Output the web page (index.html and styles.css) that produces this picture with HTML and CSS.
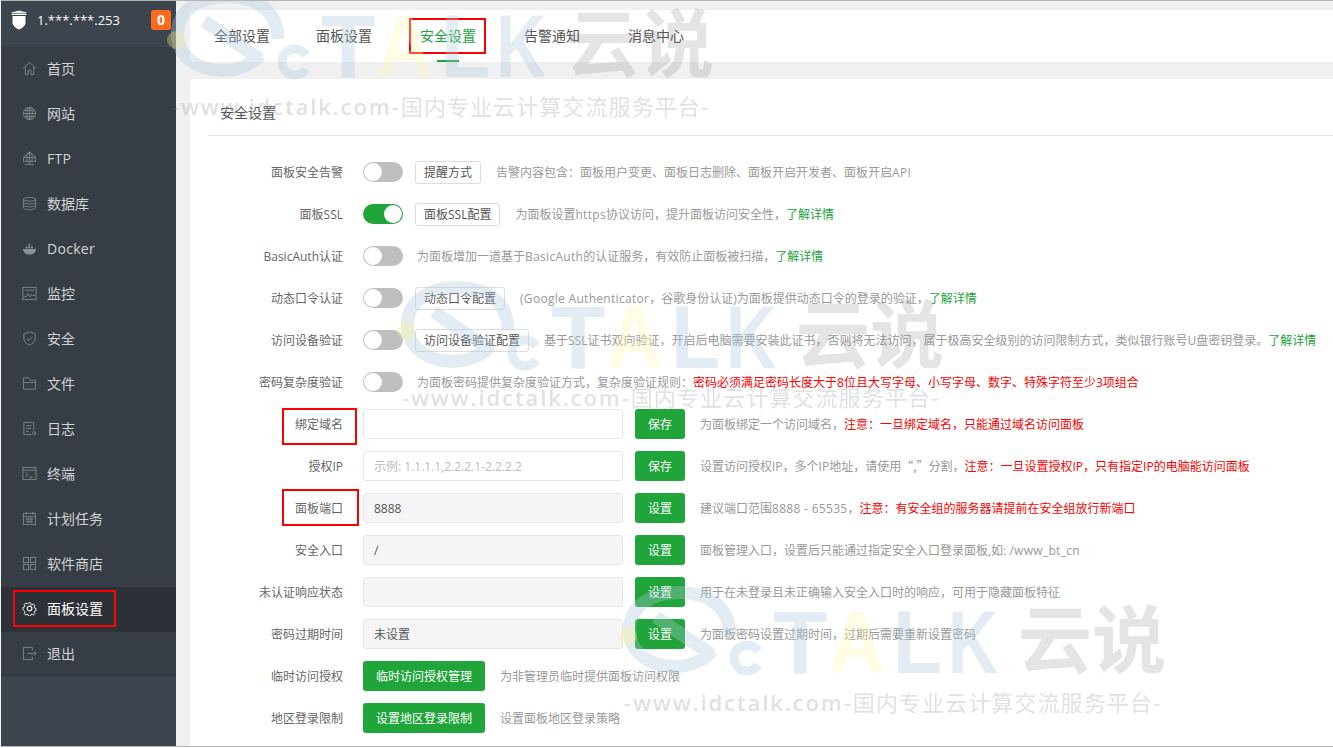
FILE: index.html
```html
<!DOCTYPE html>
<html lang="zh-CN">
<head>
<meta charset="utf-8">
<title>面板设置</title>
<link rel="stylesheet" href="styles.css">
</head>
<body>
<div class="app">
  <aside class="sidebar">
    <div class="brand">
      <svg class="brand-icon" viewBox="0 0 18 20"><path d="M1 2.500 9 .5l8 2-1.500 1h-13z" fill="#e8e8e8"/><path d="M1 5 2 4h14l1 1H1z" fill="#fff"/><path d="M2.500 6h13v6.500c0 3-3 5.500-6.500 7-3.500-1.500-6.500-4-6.500-7z" fill="#fff"/></svg>
      <span class="brand-ip">1.***.***.253</span>
      <span class="badge">0</span>
    </div>
    <nav class="menu">
      <a class="item"><svg class="ico" viewBox="0 0 16 16"><path d="M1 8 8 1.500 15 8M3.500 6.500V14.500H6.500V10H9.500V14.500H12.500V6.500"/></svg>首页</a>
      <a class="item"><svg class="ico" viewBox="0 0 16 16"><circle cx="8" cy="8" r="6.500"/><ellipse cx="8" cy="8" rx="3" ry="6.500"/><path d="M8 1.500v13M1.500 8h13M2.500 4.800h11M2.500 11.200h11"/></svg>网站</a>
      <a class="item"><svg class="ico" viewBox="0 0 16 16"><path d="M2 11a6.500 6 0 1 1 12 0"/><ellipse cx="8" cy="7" rx="3" ry="6"/><path d="M8 1v10M1.500 7h13M1 11h14M3 14.500h10"/></svg><span class="lat">FTP</span></a>
      <a class="item"><svg class="ico" viewBox="0 0 16 16"><ellipse cx="8" cy="3.500" rx="6.500" ry="2"/><path d="M1.500 3.500v9c0 1.100 2.900 2 6.500 2s6.500-.9 6.500-2v-9M1.500 6.500c0 1.100 2.900 2 6.500 2s6.500-.9 6.500-2M1.500 9.500c0 1.100 2.900 2 6.500 2s6.500-.9 6.500-2"/></svg>数据库</a>
      <a class="item"><svg class="ico ico-fill" viewBox="0 0 16 16"><path d="M1 8.500h14c-.5 3.500-3 6-7 6-4.200 0-6.500-2.500-7-6z"/><rect x="4" y="5.800" width="2" height="2"/><rect x="6.800" y="5.800" width="2" height="2"/><rect x="6.800" y="3" width="2" height="2"/><rect x="9.600" y="5.800" width="2" height="2"/></svg><span class="lat">Docker</span></a>
      <a class="item"><svg class="ico" viewBox="0 0 16 16"><rect x="1" y="1.500" width="14" height="13"/><path d="M3 4.500h10M1.500 11 5 11l1.500-3 2 3.500 1.500-2.500 1 1h3"/></svg>监控</a>
      <a class="item"><svg class="ico" viewBox="0 0 16 16"><path d="M8 1 14 3v5.500c0 3-3 5.500-6 6.500-3-1-6-3.500-6-6.500V3z"/><path d="M5 8l2.200 2L11 6"/></svg>安全</a>
      <a class="item"><svg class="ico" viewBox="0 0 16 16"><path d="M1.500 14V2H7l1.500 2.500h6V14zM1.500 7h13"/></svg>文件</a>
      <a class="item"><svg class="ico" viewBox="0 0 16 16"><path d="M10 14.500H2V1.500h10.500V10M4.500 5h5.500M4.500 8h5.500M4.500 11h3"/><circle cx="13" cy="13" r="1.600"/></svg>日志</a>
      <a class="item"><svg class="ico" viewBox="0 0 16 16"><rect x="1" y="1.500" width="14" height="13"/><path d="M1 4.500h14M4 7l2.500 2L4 11M7.500 12h4"/></svg>终端</a>
      <a class="item"><svg class="ico" viewBox="0 0 16 16"><rect x="1.500" y="2.500" width="13" height="12"/><path d="M4.500 1v3M11.500 1v3M1.500 6h13M4 8.500h8M4 11.500h8M6.500 7v6M9.500 7v6"/></svg>计划任务</a>
      <a class="item"><svg class="ico" viewBox="0 0 16 16"><rect x="1.500" y="1.500" width="5.500" height="5.500"/><rect x="9" y="1.500" width="5.500" height="5.500"/><rect x="1.500" y="9" width="5.500" height="5.500"/><rect x="9" y="9" width="5.500" height="5.500"/></svg>软件商店</a>
      <a class="item active"><svg class="ico" viewBox="0 0 16 16"><path d="M6.700 1h2.600l.4 2 1.300.6 1.800-1 1.800 1.900-1 1.700.5 1.300 1.900.5v2.600l-1.900.5-.5 1.300 1 1.700-1.800 1.800-1.800-1-1.300.6-.4 1.900H6.700l-.4-1.900-1.300-.6-1.800 1-1.800-1.800 1-1.700-.5-1.300L0 9.300V6.700l1.900-.5.500-1.300-1-1.700 1.800-1.900 1.800 1 1.300-.6z" transform="translate(1 1) scale(.875)"/><circle cx="8" cy="8" r="2.500"/></svg>面板设置</a>
      <a class="item"><svg class="ico" viewBox="0 0 16 16"><path d="M11 4.500V1.500H1.500v13H11v-3M6 8h9M12.500 5.500 15 8l-2.500 2.500"/></svg>退出</a>
    </nav>
  </aside>

  <main class="content">
    <div class="tabs">
      <a class="tab tab-first">全部设置</a>
      <a class="tab">面板设置</a>
      <a class="tab tab-active">安全设置</a>
      <a class="tab">告警通知</a>
      <a class="tab">消息中心</a>
    </div>
    <section class="card">
      <h2 class="card-title">安全设置</h2>
      <div class="rows">
        <div class="row"><span class="label">面板安全告警</span><span class="switch"></span><button class="btn-line">提醒方式</button><span class="desc">告警内容包含：面板用户变更、面板日志删除、面板开启开发者、面板开启<span class="lat">API</span></span></div>
        <div class="row"><span class="label">面板SSL</span><span class="switch on"></span><button class="btn-line">面板SSL配置</button><span class="desc">为面板设置<span class="lat">https</span>协议访问，提升面板访问安全性，<a class="link">了解详情</a></span></div>
        <div class="row"><span class="label">BasicAuth认证</span><span class="switch"></span><span class="desc desc-near">为面板增加一道基于<span class="lat">BasicAuth</span>的认证服务，有效防止面板被扫描，<a class="link">了解详情</a></span></div>
        <div class="row"><span class="label">动态口令认证</span><span class="switch"></span><button class="btn-line">动态口令配置</button><span class="desc"><span class="lat">(Google Authenticator</span>，谷歌身份认证)为面板提供动态口令的登录的验证，<a class="link">了解详情</a></span></div>
        <div class="row"><span class="label">访问设备验证</span><span class="switch"></span><button class="btn-line">访问设备验证配置</button><span class="desc">基于SSL证书双向验证，开启后电脑需要安装此证书，否则将无法访问，属于极高安全级别的访问限制方式，类似银行账号U盘密钥登录。<a class="link">了解详情</a></span></div>
        <div class="row"><span class="label">密码复杂度验证</span><span class="switch"></span><span class="desc desc-near">为面板密码提供复杂度验证方式，复杂度验证规则：<em class="warn">密码必须满足密码长度大于8位且大写字母、小写字母、数字、特殊字符至少3项组合</em></span></div>
        <div class="row"><span class="label">绑定域名</span><input class="field" type="text"><button class="btn-green">保存</button><span class="desc">为面板绑定一个访问域名，<em class="warn">注意：一旦绑定域名，只能通过域名访问面板</em></span></div>
        <div class="row"><span class="label">授权IP</span><input class="field" type="text" placeholder="示例: 1.1.1.1,2.2.2.1-2.2.2.2"><button class="btn-green">保存</button><span class="desc">设置访问授权IP，多个IP地址，请使用<span class="cjk">“,”</span>分割，<em class="warn">注意：一旦设置授权IP，只有指定IP的电脑能访问面板</em></span></div>
        <div class="row"><span class="label">面板端口</span><input class="field" type="text" value="8888" disabled><button class="btn-green">设置</button><span class="desc">建议端口范围<span class="lat">8888 - 65535</span>，<em class="warn">注意：有安全组的服务器请提前在安全组放行新端口</em></span></div>
        <div class="row"><span class="label">安全入口</span><input class="field" type="text" value="/" disabled><button class="btn-green">设置</button><span class="desc">面板管理入口，设置后只能通过指定安全入口登录面板,如: <span class="lat">/www_bt_cn</span></span></div>
        <div class="row"><span class="label">未认证响应状态</span><input class="field" type="text" disabled><button class="btn-green">设置</button><span class="desc">用于在未登录且未正确输入安全入口时的响应，可用于隐藏面板特征</span></div>
        <div class="row"><span class="label">密码过期时间</span><input class="field" type="text" value="未设置" disabled><button class="btn-green">设置</button><span class="desc">为面板密码设置过期时间，过期后需要重新设置密码</span></div>
        <div class="row"><span class="label">临时访问授权</span><button class="btn-green btn-wide">临时访问授权管理</button><span class="desc">为非管理员临时提供面板访问权限</span></div>
        <div class="row"><span class="label">地区登录限制</span><button class="btn-green btn-wide">设置地区登录限制</button><span class="desc">设置面板地区登录策略</span></div>
      </div>
    </section>
  </main>

  <div class="mark mark-tab"></div>
  <div class="mark mark-nav"></div>
  <div class="mark mark-domain"></div>
  <div class="mark mark-port"></div>

  <div class="wm wm-a">
    <svg class="wm-logo" viewBox="0 0 150 100"><path class="wm-blue" d="M110 50C110 20 85 7.500 60 7.500 30 7.500 9.500 22 9.500 45 9.500 68 30 81.500 55 81.500 70 81.500 85 75 92 66M36 32 92 70"/><path class="wm-blue wm-c" d="M138 66a13 13 0 1 0 0 14"/><circle class="wm-dot" cx="8" cy="51" r="9"/></svg>
    <span class="wm-talk"><b class="l-t">T</b><b class="l-a">A</b><b class="l-l">L</b><b class="l-k">K</b></span><span class="wm-yun">云说</span>
    <p class="wm-line"><span class="wm-url">-www.idctalk.com-</span>国内专业云计算交流服务平台-</p>
  </div>
  <div class="wm wm-b">
    <svg class="wm-logo" viewBox="0 0 150 100"><path class="wm-blue" d="M110 50C110 20 85 7.500 60 7.500 30 7.500 9.500 22 9.500 45 9.500 68 30 81.500 55 81.500 70 81.500 85 75 92 66M36 32 92 70"/><path class="wm-blue wm-c" d="M138 66a13 13 0 1 0 0 14"/><circle class="wm-dot" cx="8" cy="51" r="9"/></svg>
    <span class="wm-talk"><b class="l-t">T</b><b class="l-a">A</b><b class="l-l">L</b><b class="l-k">K</b></span><span class="wm-yun">云说</span>
    <p class="wm-line"><span class="wm-url">-www.idctalk.com-</span>国内专业云计算交流服务平台-</p>
  </div>
  <div class="wm wm-c-pos">
    <svg class="wm-logo" viewBox="0 0 150 100"><path class="wm-blue" d="M110 50C110 20 85 7.500 60 7.500 30 7.500 9.500 22 9.500 45 9.500 68 30 81.500 55 81.500 70 81.500 85 75 92 66M36 32 92 70"/><path class="wm-blue wm-c" d="M138 66a13 13 0 1 0 0 14"/><circle class="wm-dot" cx="8" cy="51" r="9"/></svg>
    <span class="wm-talk"><b class="l-t">T</b><b class="l-a">A</b><b class="l-l">L</b><b class="l-k">K</b></span><span class="wm-yun">云说</span>
    <p class="wm-line"><span class="wm-url">-www.idctalk.com-</span>国内专业云计算交流服务平台-</p>
  </div>
</div>
</body>
</html>
```
FILE: styles.css
```css
* { box-sizing: border-box; }
html, body { margin: 0; padding: 0; height: 100%; overflow: hidden; background: #fff; }
body { font-family: "Open Sans", "Noto Sans CJK SC", sans-serif; font-size: 12px; color: #666; }

.app {
  position: relative;
  display: flex;
  width: 1333px;
  height: 747px;
  overflow: hidden;
  background: #f0f0f0;
  border-top: 1px solid #b5b5b5;
  border-bottom: 1px solid #b5b5b5;
  border-left: 1px solid #f0f0f0;
}
.lat { letter-spacing: .3px; }
.cjk { font-family: "Noto Sans CJK SC", sans-serif; }

/* sidebar */
.sidebar { flex: 0 0 175px; display: flex; flex-direction: column; background: #3c444d; }
.brand { flex: 0 0 46px; display: flex; align-items: flex-start; padding: 9px 5px 0 9px; }
.brand-icon { width: 18px; height: 20px; margin-right: 9px; }
.brand-ip { flex: 1; color: #fff; font-size: 13px; line-height: 20px; }
.badge {
  width: 20px; height: 20px; border-radius: 3px; background: #ff6a1f;
  color: #fff; font-weight: 700; font-size: 14px; line-height: 20px; text-align: center;
}
.menu { display: flex; flex-direction: column; background: #363d45; }
.item {
  display: flex; align-items: center; height: 45px; padding: 0 0 3px 21px;
  color: #d2d5d8; font-size: 14px;
}
.item.active { background: #2c3138; color: #fff; }
.ico {
  width: 15px; height: 15px; margin-right: 10px; flex: none;
  fill: none; stroke: #7d858d; stroke-width: 1;
}
.ico-fill { fill: #8a9097; stroke: none; }
.active .ico { stroke: #e8eef3; stroke-width: 1.200; }

/* main */
.content { flex: 1; min-width: 0; padding: 9px 0 0 14px; display: flex; flex-direction: column; }
.tabs {
  flex: 0 0 52px; display: flex; align-items: center; gap: 48px; padding-left: 24px;
  background: #fff; border-radius: 3px 0 0 3px;
}
.tab { position: relative; font-size: 14px; color: #555; line-height: 52px; white-space: nowrap; }
.tab-first { margin-right: -2px; }
.tab-active { color: #20a53a; }
.tab-active::after {
  content: ""; position: absolute; left: 17px; bottom: 0; width: 22px; height: 2px; background: #20a53a;
}
.card { flex: 1; margin-top: 17px; padding: 0 0 0 18px; background: #fff; border-radius: 3px 0 0 0; }
.card-title {
  margin: 0 0 15px; height: 57px; line-height: 68px; padding-left: 12px;
  font-size: 14px; font-weight: 400; color: #555; border-bottom: 1px solid #e6e6e6;
}
.row { display: flex; align-items: center; height: 42px; white-space: nowrap; }
.label { flex: 0 0 135px; margin-right: 20px; text-align: right; color: #666; font-size: 12px; }
.switch {
  position: relative; flex: none; width: 40px; height: 20px; margin-right: 12px;
  border-radius: 10px; background: #bfbfbf;
}
.switch::after {
  content: ""; position: absolute; left: 1px; top: 1px; width: 18px; height: 18px;
  border-radius: 50%; background: #fff;
}
.switch.on { background: #20a53a; }
.switch.on::after { left: 21px; }
.btn-line {
  flex: none; height: 23px; margin: 0 15px 0 0; padding: 0 8px; background: #fff;
  border: 1px solid #ddd; border-radius: 3px; color: #555;
  font: inherit; line-height: 21px;
}
.desc { color: #999; font-size: 12px; }
.desc-near { margin-left: 2px; }
.link { color: #20a53a; }
.warn { color: #f00; font-style: normal; }
.field {
  flex: none; width: 260px; height: 30px; margin: 0 12px 0 0; padding: 0 10px;
  border: 1px solid #e6e6e6; border-radius: 3px; background: #fff;
  color: #555; font: inherit; outline: none;
}
.field:disabled { background: #f5f5f5; color: #555; -webkit-text-fill-color: #555; opacity: 1; }
.field::placeholder { color: #bbb; }
.btn-green {
  flex: none; width: 50px; height: 30px; margin: 0 15px 0 0; padding: 0; border: 0;
  border-radius: 3px; background: #20a53a; color: #fff; font: inherit;
}
.btn-wide { width: 122px; }

/* red annotation frames */
.mark { position: absolute; border: 2px solid #f00; pointer-events: none; }
.mark-tab { left: 408px; top: 17px; width: 77px; height: 36px; }
.mark-nav { left: 12px; top: 589px; width: 103px; height: 37px; }
.mark-domain { left: 281px; top: 407px; width: 75px; height: 37px; }
.mark-port { left: 281px; top: 488px; width: 77px; height: 37px; }

/* watermarks over the page */
.wm { position: absolute; width: 560px; height: 135px; pointer-events: none; }
.wm-a { left: 167px; top: -12px; }
.wm-b { left: 397px; top: 279px; }
.wm-c-pos { left: 619px; top: 584px; }
.wm-logo { position: absolute; left: 0; top: 0; width: 150px; height: 100px; overflow: visible; }
.wm-blue { fill: none; stroke: rgba(170, 198, 216, .34); stroke-width: 13; }
.wm-c { stroke-width: 9; }
.wm-dot { fill: rgba(255, 240, 140, .32); }
.wm-talk {
  position: absolute; left: 153px; top: 7px; display: flex;
  font-family: "Liberation Sans", sans-serif; font-size: 89px; line-height: 100px; font-weight: 700;
  color: rgba(170, 198, 216, .34);
}
.wm-talk b { display: block; transform-origin: left center; }
.l-t { width: 56px; }
.l-a { width: 64px; transform: scaleX(.86); color: rgba(255, 246, 170, .32); }
.l-l { width: 55px; transform: scaleX(.9); }
.l-k { width: 45px; transform: scaleX(.78); }
.wm-yun {
  position: absolute; left: 398px; top: 0; font-family: "Noto Sans CJK SC", sans-serif;
  font-weight: 700; font-size: 74px; line-height: 100px; color: rgba(120, 120, 120, .2);
}
.wm-line {
  position: absolute; left: 4px; top: 101px; margin: 0; white-space: nowrap;
  font-family: "Noto Sans CJK SC", sans-serif; font-size: 22px; line-height: 30px;
  letter-spacing: 1.100px; color: rgba(120, 120, 120, .24);
}
.wm-url { font-family: "Open Sans", sans-serif; font-weight: 600; letter-spacing: 1.900px; }
```
